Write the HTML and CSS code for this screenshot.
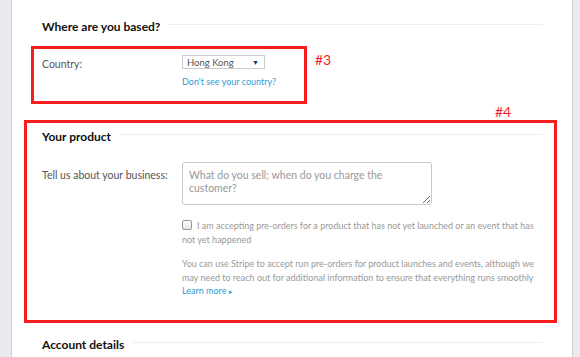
FILE: index.html
```html
<!DOCTYPE html>
<html lang="en">

<head>
    <meta charset="UTF-8">
    <meta name="viewport" content="width=device-width, initial-scale=1.0">
    <title>Activate your account</title>
    <link rel="stylesheet" href="styles.css">
</head>

<body>
    <div class="panel">
        <div class="section first">
            <div class="section-title">
                <h2>Where are you based?</h2>
                <span class="rule"></span>
            </div>
            <div class="form-row country-row">
                <label class="row-label" for="country">Country:</label>
                <div class="row-field">
                    <div class="select" id="country">
                        <span>Hong Kong</span>
                        <span class="caret">&#9660;</span>
                    </div>
                    <a class="link country-link" href="#">Don't see your country?</a>
                </div>
            </div>
        </div>

        <div class="section product">
            <div class="section-title">
                <h2>Your product</h2>
                <span class="rule"></span>
            </div>
            <div class="form-row">
                <label class="row-label label-business" for="business">Tell us about your business:</label>
                <div class="row-field">
                    <textarea id="business" placeholder="What do you sell; when do you charge the customer?"></textarea>
                    <p class="check-text"><span class="checkbox"></span>I am accepting pre-orders for a product that has not yet launched or an event that has not yet happened</p>
                    <p class="help-text">You can use Stripe to accept run pre-orders for product launches and events, although we may need to reach out for additional information to ensure that everything runs smoothly <a class="link" href="#">Learn more <span class="arrow">&#9656;</span></a></p>
                </div>
            </div>
        </div>

        <div class="section account">
            <div class="section-title">
                <h2>Account details</h2>
                <span class="rule"></span>
            </div>
        </div>

        <!-- annotation overlays -->
        <div class="mark mark-3"></div>
        <span class="mark-label label-3">#3</span>
        <div class="mark mark-4"></div>
        <span class="mark-label label-4">#4</span>
    </div>
</body>

</html>
```

FILE: styles.css
```css
* {
    box-sizing: border-box;
}

body {
    margin: 0;
    height: 357px;
    overflow: hidden;
    background-color: #e9ebee;
    font-family: "Lato", "Open Sans", sans-serif;
    color: #555;
}

.panel {
    position: relative;
    margin: 0 7px 0 11px;
    height: 357px;
    background-color: #fff;
    border-left: 1px solid #cfd3d8;
    border-right: 1px solid #cfd3d8;
    padding: 20px 29px 0 30px;
}

.section-title {
    display: flex;
    align-items: flex-start;
    gap: 8px;
}

.section-title h2 {
    margin: 0;
    font-size: 12px;
    line-height: 14px;
    font-weight: bold;
    color: #111;
    white-space: nowrap;
}

.rule {
    flex: 1;
    height: 1px;
    margin-top: 4px;
    background-color: #eee;
}

.form-row {
    display: flex;
}

.row-label {
    width: 140px;
    flex-shrink: 0;
    font-size: 10.5px;
    line-height: 14px;
}

.row-field {
    flex: 1;
    display: flex;
    flex-direction: column;
    align-items: flex-start;
}

.country-row {
    margin-top: 21px;
}

.country-row .row-label {
    margin-top: 2px;
}

.select {
    display: flex;
    justify-content: space-between;
    align-items: center;
    width: 83px;
    height: 14px;
    padding: 0 5px 0 4px;
    border: 1px solid #ccc;
    font-size: 9.5px;
    color: #555;
}

.caret {
    font-size: 7px;
    color: #2b3450;
}

.link {
    color: #2d9bd8;
    text-decoration: none;
}

.country-link {
    margin-top: 6px;
    font-size: 9px;
    line-height: 14px;
}

.product {
    margin-top: 41px;
}

.product .form-row {
    margin-top: 18px;
}

.label-business {
    margin-top: 6px;
}

textarea {
    width: 250px;
    height: 43px;
    padding: 6px 6px;
    border: 1px solid #c8c8c8;
    border-radius: 3px;
    font-family: inherit;
    font-size: 10.5px;
    line-height: 13px;
    resize: vertical;
}

textarea::placeholder {
    color: #999;
}

.check-text,
.help-text {
    margin: 0;
    font-size: 9px;
    line-height: 13.5px;
    color: #999;
}

.check-text {
    margin-top: 14px;
}

.checkbox {
    display: inline-block;
    width: 10px;
    height: 10px;
    margin-right: 5px;
    vertical-align: -1px;
    border: 1px solid #999;
    border-radius: 2px;
    background: linear-gradient(#fdfdfd, #e3e3e3);
}

.help-text {
    margin-top: 11px;
}

.help-text .link {
    display: block;
}

.arrow {
    font-size: 7px;
}

.account {
    margin-top: 39px;
}

/* annotation overlays */
.mark {
    position: absolute;
    border: 3px solid #f51d1d;
}

.mark-3 {
    left: 19px;
    top: 46px;
    width: 276px;
    height: 58px;
}

.mark-4 {
    left: 12px;
    top: 120px;
    width: 533px;
    height: 203px;
}

.mark-label {
    position: absolute;
    font-size: 14px;
    color: #f51d1d;
}

.label-3 {
    left: 303px;
    top: 51px;
}

.label-4 {
    left: 483px;
    top: 103px;
}
```
